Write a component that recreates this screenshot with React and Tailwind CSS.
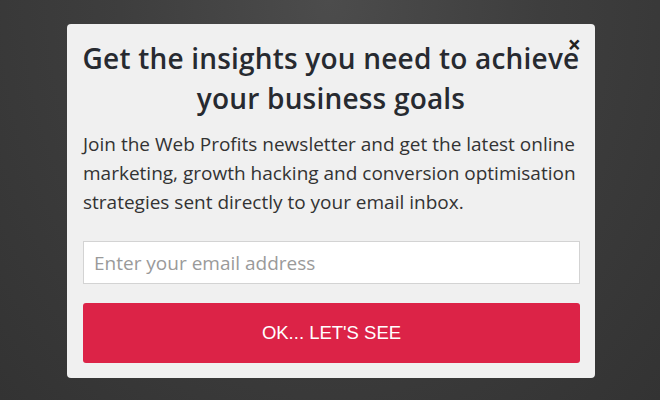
export default function App() {
  return (
    <div className="w-[660px] h-[400px] overflow-hidden bg-[radial-gradient(ellipse_at_50%_0%,#4c4c4c_0%,#3e3e3e_45%,#333333_100%)] pt-[24px] pl-[67px]">
      <div className="relative w-[528px] h-[354px] bg-[#f0f0f0] rounded-[4px] px-[16px] pt-[14px]" style={{ fontFamily: '"Open Sans", sans-serif' }}>
        <button className="absolute right-[14px] top-[9px] text-[#222] text-[23px] leading-none font-bold">×</button>
        <h1 className="-mx-[16px] whitespace-nowrap text-center text-[28px] leading-[40px] font-semibold text-[#272a30] tracking-[0.2px]">
          Get the insights you need to achieve<br />your business goals
        </h1>
        <p className="mt-[12px] text-[19px] leading-[29px] text-[#333] ">
          Join the Web Profits newsletter and get the latest online marketing, growth hacking and conversion optimisation strategies sent directly to your email inbox.
        </p>
        <input
          className="mt-[24px] block w-[497px] h-[43px] bg-white border border-[#d3d3d3] px-[10px] text-[19px] text-[#333] placeholder:text-[#9a9a9a] outline-none"
          placeholder="Enter your email address"
        />
        <button
          className="mt-[19px] block w-[497px] h-[60px] rounded-[3px] bg-[#dc2347] text-white text-[18.5px]"
          style={{ fontFamily: '"Liberation Sans", Arial, sans-serif' }}
        >
          OK... LET'S SEE
        </button>
      </div>
    </div>
  );
}
